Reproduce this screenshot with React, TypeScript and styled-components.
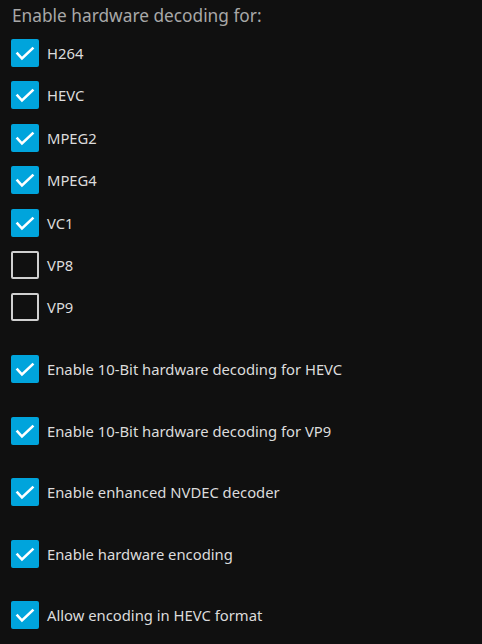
import styled, { createGlobalStyle } from "styled-components";

const GlobalStyle = createGlobalStyle`
  html, body {
    margin: 0;
    padding: 0;
    background: #101010;
  }
  body {
    font-family: "Noto Sans", "Open Sans", sans-serif;
    -webkit-font-smoothing: antialiased;
  }
`;

interface GroupProps {
  spacing: number;
}

interface BoxProps {
  checked: boolean;
}

const decoders = [
  { label: "H264", checked: true },
  { label: "HEVC", checked: true },
  { label: "MPEG2", checked: true },
  { label: "MPEG4", checked: true },
  { label: "VC1", checked: true },
  { label: "VP8", checked: false },
  { label: "VP9", checked: false },
];

const options = [
  "Enable 10-Bit hardware decoding for HEVC",
  "Enable 10-Bit hardware decoding for VP9",
  "Enable enhanced NVDEC decoder",
  "Enable hardware encoding",
  "Allow encoding in HEVC format",
];

const CheckRow = ({ label, checked }: { label: string; checked: boolean }) => (
  <Row>
    <Box checked={checked}>
      {checked && (
        <svg width="28" height="28" viewBox="0 0 28 28">
          <path
            d="M6.5 14.5 L11 19.5 L21.5 9.5"
            fill="none"
            stroke="#fff"
            strokeWidth="2.6"
            strokeLinecap="square"
          />
        </svg>
      )}
    </Box>
    <Label>{label}</Label>
  </Row>
);

const App = () => {
  return (
    <>
      <GlobalStyle />
      <Page>
        <Title>Enable hardware decoding for:</Title>
        <Group spacing={14.4}>
          {decoders.map((d) => (
            <CheckRow key={d.label} label={d.label} checked={d.checked} />
          ))}
        </Group>
        <Group spacing={33.6} style={{ marginTop: 33.6 }}>
          {options.map((o) => (
            <CheckRow key={o} label={o} checked />
          ))}
        </Group>
      </Page>
    </>
  );
};

const Page = styled.div`
  width: 482px;
  height: 644px;
  padding: 4px 11px 0;
  box-sizing: border-box;
  overflow: hidden;
`;

const Title = styled.h3`
  margin: 0 0 11px 1px;
  font-size: 17.3px;
  font-weight: 400;
  line-height: 24px;
  color: #a8a8a8;
`;

const Group = styled.div<GroupProps>`
  display: flex;
  flex-direction: column;
  gap: ${(p) => p.spacing}px;
`;

const Row = styled.label`
  display: flex;
  align-items: center;
  height: 28px;
`;

const Box = styled.span<BoxProps>`
  display: flex;
  width: 28px;
  height: 28px;
  box-sizing: border-box;
  border-radius: 2px;
  flex-shrink: 0;
  background: ${(p) => (p.checked ? "#00a4dc" : "transparent")};
  border: ${(p) => (p.checked ? "none" : "2px solid #d0d0d0")};
`;

const Label = styled.span`
  margin-left: 8px;
  font-size: 14.8px;
  color: #dcdcdc;
`;

export default App;
